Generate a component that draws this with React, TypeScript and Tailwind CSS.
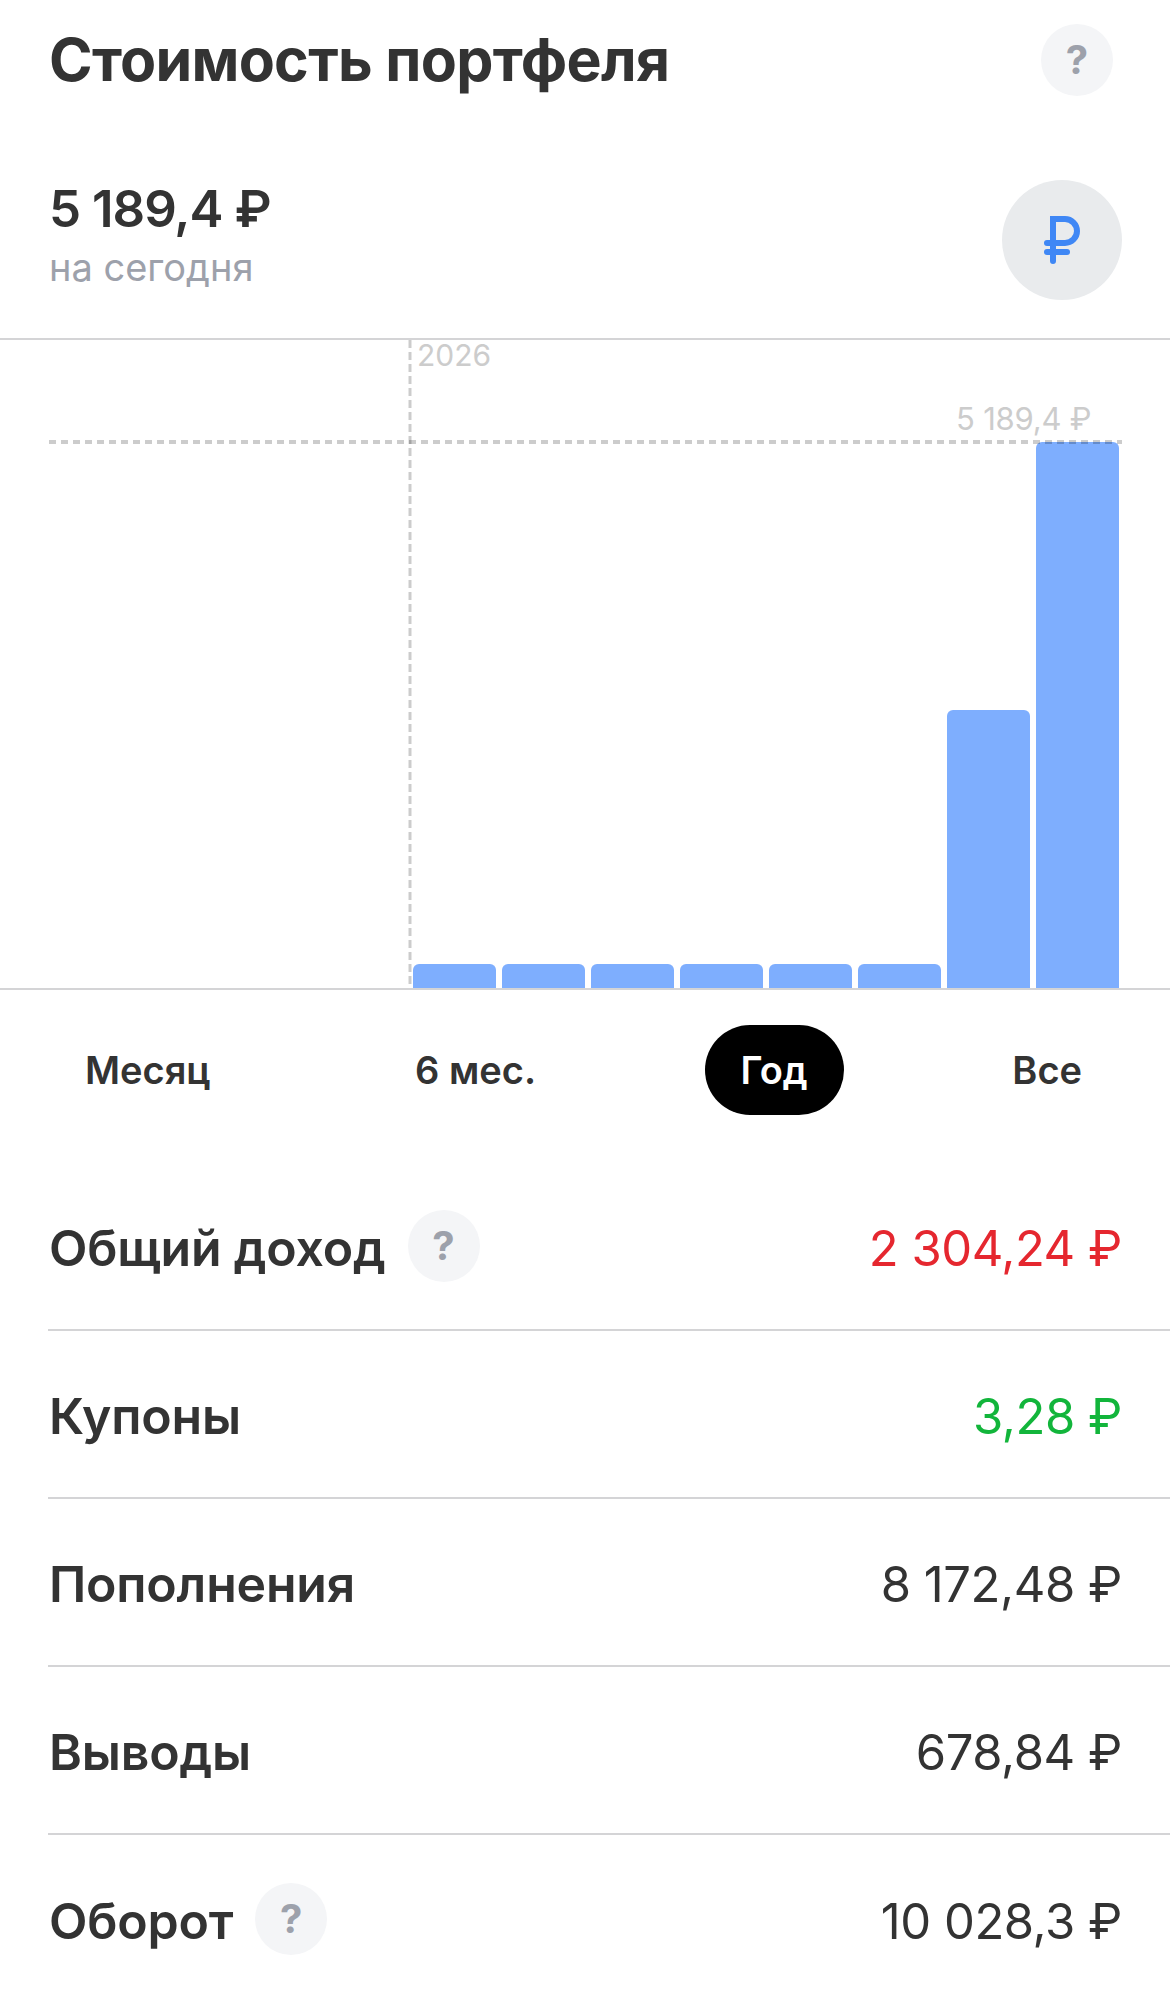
const bars = [24, 24, 24, 24, 24, 24, 278, 546];

function HelpButton() {
  return (
    <div className="flex h-[72px] w-[72px] shrink-0 items-center justify-center rounded-full bg-[#f4f5f7] text-[40px] leading-none font-bold text-[#9da1ab]">
      ?
    </div>
  );
}

function Row(props: { label: string; value: string; color?: string; help?: boolean; last?: boolean }) {
  return (
    <div className={"flex h-[168px] items-center justify-between pr-[48px] " + (props.last ? "" : "border-b-2 border-[#d4d4d6]")}>
      <div className="flex items-center gap-[22px] pl-[1px]">
        <span className="pt-[5px] text-[50px] font-semibold tracking-[-0.2px] text-[#333333]">{props.label}</span>
        {props.help && <HelpButton />}
      </div>
      <span className={"pt-[6px] text-[49px] tracking-[-0.45px] " + (props.color || "text-[#333333]")}>{props.value}</span>
    </div>
  );
}

export default function App() {
  return (
    <div className="h-[1996px] w-full overflow-hidden bg-white font-['Inter',sans-serif]">
      <div className="flex h-[120px] items-center justify-between pr-[57px] pl-[49px]">
        <h1 className="text-[59px] font-bold tracking-[-0.7px] text-[#333333]">Стоимость портфеля</h1>
        <HelpButton />
      </div>

      <div className="flex h-[220px] items-start justify-between border-b-2 border-[#d4d4d6] pt-[60px] pr-[48px] pl-[49px]">
        <div>
          <div className="text-[51px] leading-[58px] font-semibold tracking-[-1px] text-[#333333]">5 189,4 ₽</div>
          <div className="pt-[4px] text-[38px] leading-[50px] text-[#9da1ab]">на сегодня</div>
        </div>
        <div className="flex h-[120px] w-[120px] items-center justify-center rounded-full bg-[#e9ebed]">
          <svg width="120" height="120" viewBox="0 0 120 120" fill="none" stroke="#3f87f5" strokeWidth="6" strokeLinecap="round" strokeLinejoin="miter">
            <path d="M51 81V39H63a12 12 0 0 1 0 24H45" />
            <path d="M45 72H65" />
          </svg>
        </div>
      </div>

      <div className="relative flex h-[650px] items-end justify-end gap-[6px] border-b-2 border-[#d4d4d6] pr-[51px]">
        {bars.map((h, i) => (
          <div key={i} className="w-[83px] rounded-t-[6px] bg-[#7eaefe]" style={{ height: h }} />
        ))}
        <svg className="absolute top-0 left-0" width="1170" height="648" fill="none" stroke="rgba(0,0,0,0.2)">
          <path d="M49 102H1122" strokeWidth="4" strokeDasharray="7 5" />
          <path d="M410 0V648" strokeWidth="3" strokeDasharray="8 4" />
        </svg>
        <span className="absolute top-[-3px] left-[417px] text-[30px] leading-[36px] text-[#cccccc]">2026</span>
        <span className="absolute top-[61px] left-[956px] text-[31px] leading-[36px] tracking-[-0.2px] text-[#cccccc]">5 189,4 ₽</span>
      </div>

      <div className="flex items-center justify-between pt-[35px] pr-[52px] pb-[48px] pl-[49px]">
        {["Месяц", "6 мес.", "Год", "Все"].map((t) => (
          <div key={t} className={"flex h-[90px] items-center rounded-full px-[36px] text-[38px] font-semibold " + (t === "Год" ? "bg-black text-white" : "text-[#333333]")}>
            {t}
          </div>
        ))}
      </div>

      <div className="pl-[48px]">
        <Row label="Общий доход" value="2 304,24 ₽" color="text-[#e5272f]" help />
        <Row label="Купоны" value="3,28 ₽" color="text-[#12b53b]" />
        <Row label="Пополнения" value="8 172,48 ₽" />
        <Row label="Выводы" value="678,84 ₽" />
        <Row label="Оборот" value="10 028,3 ₽" help last />
      </div>
    </div>
  );
}
